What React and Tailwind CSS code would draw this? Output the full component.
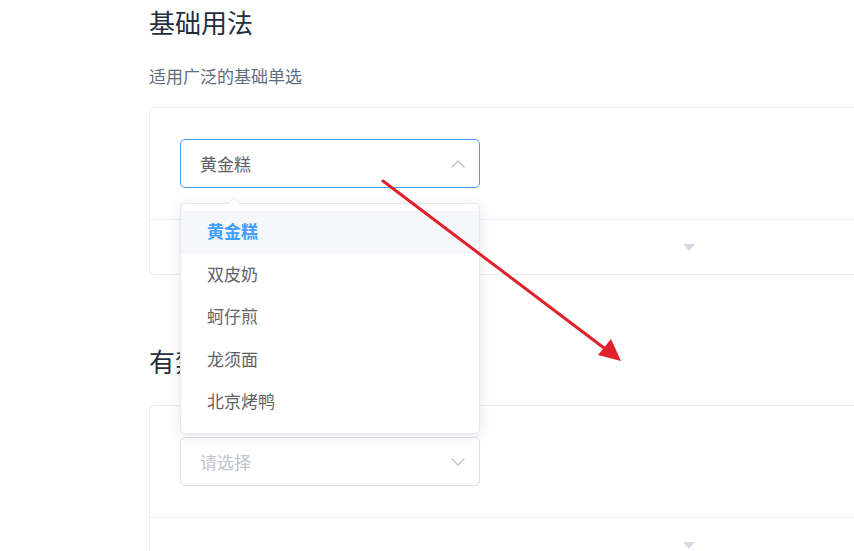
import React from "react";

const foods = ["黄金糕", "双皮奶", "蚵仔煎", "龙须面", "北京烤鸭"];

const ChevronUp = ({ down }) => (
  <svg width="16" height="10" viewBox="0 0 16 10" className={down ? "rotate-180" : ""}>
    <path d="M1.5 8.5 L8 2 L14.5 8.5" fill="none" stroke="#c0c4cc" strokeWidth="1.3" />
  </svg>
);

const DemoCard = ({ value, placeholder, focused }) => (
  <div className="w-[1080px] rounded-[5px] border border-[#ebebeb]">
    <div className="px-[30px] py-[31px]">
      <div
        className={
          "flex h-[49px] w-[300px] items-center justify-between rounded-[5px] border pl-[19px] pr-[13px] text-[17px] " +
          (focused ? "border-[#409eff]" : "border-[#dcdfe6]")
        }
      >
        <span className={value ? "text-[#606266]" : "text-[#c0c4cc]"}>{value || placeholder}</span>
        <ChevronUp down={!focused} />
      </div>
    </div>
    <div className="flex h-[55px] items-center justify-center border-t border-[#eaeefb]">
      <svg width="14" height="9" viewBox="0 0 14 9">
        <path d="M1 1 L13 1 L7 8 Z" fill="#d3dce6" />
      </svg>
    </div>
  </div>
);

export default function App() {
  return (
    <div
      className="relative h-[551px] w-[854px] overflow-hidden bg-white pl-[149px]"
      style={{ fontFamily: '"Noto Sans CJK SC", "Noto Sans", sans-serif' }}
    >
      <h3 className="pt-[4px] text-[26px] leading-[36px] font-normal text-[#1f2f3d]">基础用法</h3>
      <p className="mt-[23px] text-[17px] leading-[26px] text-[#5e6d82]">适用广泛的基础单选</p>
      <div className="mt-[18px]">
        <DemoCard value="黄金糕" focused />
      </div>

      <h3 className="mt-[68px] text-[26px] leading-[36px] font-normal text-[#1f2f3d]">有禁用选项</h3>
      <div className="mt-[26px]">
        <DemoCard placeholder="请选择" />
      </div>

      {/* dropdown */}
      <div className="absolute left-[180px] top-[203px] w-[300px] rounded-[5px] border border-[#e4e7ed] bg-white pb-[9px] pt-[7px] shadow-[0_2px_12px_0_rgba(0,0,0,0.1)]">
        <div className="absolute -top-[7px] left-[46px] h-0 w-0 border-x-[7px] border-b-[7px] border-x-transparent border-b-[#e4e7ed]" />
        <div className="absolute -top-[6px] left-[46px] h-0 w-0 border-x-[7px] border-b-[7px] border-x-transparent border-b-white" />
        {foods.map((f, i) => (
          <div
            key={f}
            className={
              "flex h-[42.5px] items-center pb-[3px] pl-[26px] text-[17px] " +
              (i === 0 ? "bg-[#f5f7fa] font-bold text-[#409eff]" : "text-[#606266]")
            }
          >
            {f}
          </div>
        ))}
      </div>

      {/* annotation arrow */}
      <svg className="pointer-events-none absolute inset-0" width="854" height="551">
        <line x1="383" y1="181" x2="608" y2="351" stroke="#e0202a" strokeWidth="3" strokeLinecap="round" />
        <path d="M621 361 L598 355 L611 339 Z" fill="#e0202a" />
      </svg>
    </div>
  );
}
